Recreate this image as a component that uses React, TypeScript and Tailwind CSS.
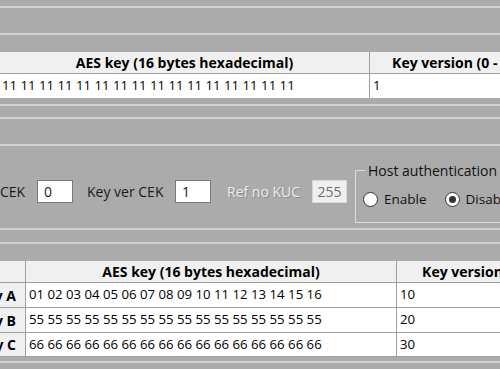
import React from "react";

const font = { fontFamily: '"Open Sans", "Noto Sans", sans-serif' };

function Line() {
  return <div className="h-[2px] bg-[#d0d0d0]" />;
}

function Radio({ label, checked }: { label: string; checked?: boolean }) {
  return (
    <div className="flex items-center">
      <span className="flex h-[15px] w-[15px] items-center justify-center rounded-full border border-[#333] bg-white">
        {checked && <span className="h-[7px] w-[7px] rounded-full bg-[#333]" />}
      </span>
      <span className="ml-[6px] text-[13.5px] leading-[15px] text-[#111]">{label}</span>
    </div>
  );
}

const bottomRows = [
  { name: "Key A", key: "01 02 03 04 05 06 07 08 09 10 11 12 13 14 15 16", ver: "10", h: "h-[25px]" },
  { name: "Key B", key: "55 55 55 55 55 55 55 55 55 55 55 55 55 55 55 55", ver: "20", h: "h-[25px]" },
  { name: "Key C", key: "66 66 66 66 66 66 66 66 66 66 66 66 66 66 66 66", ver: "30", h: "h-[24px]" },
];

export default function App() {
  return (
    <div className="h-[369px] w-[500px] overflow-hidden bg-[#ababab] text-black" style={font}>
      <div className="h-[6px]" />
      <Line />
      <div className="h-[25px]" />
      <Line />
      <div className="h-[17px]" />

      {/* top key table */}
      <div className="flex h-[22px] border-b border-[#a0a0a0] bg-[#f0f0f0] text-[14px] font-bold">
        <div className="flex w-[370px] shrink-0 items-center justify-center border-r border-[#a0a0a0]">
          AES key (16 bytes hexadecimal)
        </div>
        <div className="flex w-[182px] shrink-0 items-center justify-center whitespace-nowrap">Key version (0 - 255)</div>
      </div>
      <div className="flex h-[24px] bg-white text-[13.2px]">
        <div className="flex w-[370px] shrink-0 items-center border-r border-[#a0a0a0] pl-[2px]">
          11 11 11 11 11 11 11 11 11 11 11 11 11 11 11 11
        </div>
        <div className="flex w-[182px] shrink-0 items-center pl-[3px]">1</div>
      </div>

      <div className="h-[6px]" />
      <Line />
      <div className="h-[11px]" />
      <Line />
      <div className="h-[25px]" />
      <Line />

      {/* cek / kuc controls */}
      <div className="flex h-[82px] items-start text-[14px] text-[#1a1a1a]">
        <div className="mt-[34px] flex items-center">
          <span className="w-[37px]">CEK</span>
          <div className="flex h-[23px] w-[36px] items-center border border-[#7a7a7a] bg-white pl-[6px]">0</div>
          <span className="ml-[14px] w-[88px]">Key ver CEK</span>
          <div className="flex h-[23px] w-[36px] items-center border border-[#7a7a7a] bg-white pl-[6px]">1</div>
          <span className="ml-[16px] w-[85px] text-[#ececec] [text-shadow:1px_1px_0_#8c8c8c]">Ref no KUC</span>
          <div className="flex h-[23px] w-[35px] items-center justify-center border border-[#d8d8d8] bg-[#f0f0f0] text-[#6d6d6d]">
            255
          </div>
        </div>
        <fieldset className="ml-[8px] mt-[16px] h-[61px] w-[200px] shrink-0 border border-[#dcdcdc] px-0">
          <legend className="ml-[9px] whitespace-nowrap px-[3px] text-[14px] leading-[17px] text-[#111]">
            Host authentication
          </legend>
          <div className="flex gap-[18px] pl-[7px] pt-[13px]">
            <Radio label="Enable" />
            <Radio label="Disable" checked />
          </div>
        </fieldset>
      </div>

      <Line />
      <div className="h-[12px]" />
      <Line />
      <div className="h-[17px]" />

      {/* bottom key table */}
      <div className="flex h-[22px] border-b border-[#a0a0a0] bg-[#f0f0f0] text-[14px] font-bold">
        <div className="w-[26px] shrink-0 border-r border-[#a0a0a0]" />
        <div className="flex w-[371px] shrink-0 items-center justify-center border-r border-[#a0a0a0]">
          AES key (16 bytes hexadecimal)
        </div>
        <div className="flex w-[188px] shrink-0 items-center justify-center whitespace-nowrap">Key version (0 - 255)</div>
      </div>
      {bottomRows.map((r) => (
        <div key={r.name} className={`flex ${r.h} border-b border-[#a0a0a0] text-[13.2px]`}>
          <div className="flex w-[26px] shrink-0 items-center justify-end overflow-hidden whitespace-nowrap border-r border-[#a0a0a0] bg-[#f0f0f0] pr-[9px] text-[14px] font-bold">
            {r.name}
          </div>
          <div className="flex w-[371px] shrink-0 items-center border-r border-[#a0a0a0] bg-white pl-[3px]">
            {r.key}
          </div>
          <div className="flex w-[188px] shrink-0 items-center bg-white pl-[3px]">{r.ver}</div>
        </div>
      ))}

      <div className="h-[4px]" />
      <Line />
    </div>
  );
}
